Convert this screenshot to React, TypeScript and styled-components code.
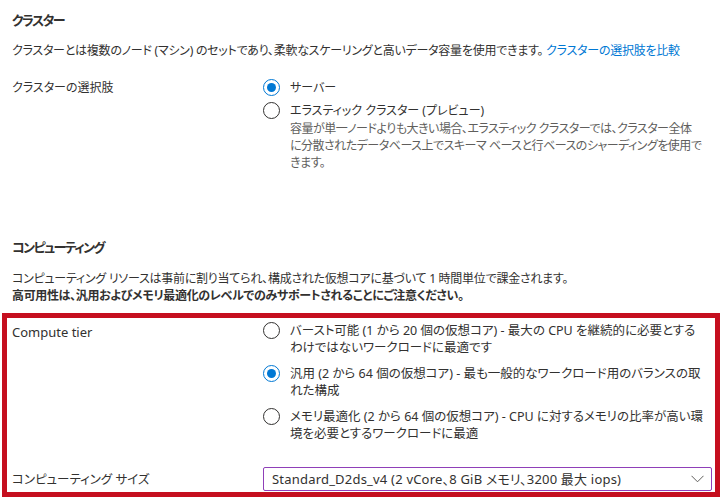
import * as React from 'react';
import styled, { createGlobalStyle } from 'styled-components';

const GlobalStyle = createGlobalStyle`
  html, body {
    margin: 0;
    padding: 0;
    background: #fff;
  }
  body {
    font-family: "Noto Sans", "Noto Sans CJK JP", sans-serif;
    font-size: 12px;
    color: #323130;
    font-feature-settings: "palt";
  }
`;

const Page = styled.div`
  width: 727px;
  padding-top: 10px;
`;

const Section = styled.section<{ $top?: number }>`
  padding: 0 12px;
  margin-top: ${(p) => p.$top ?? 0}px;
`;

const Heading = styled.h2`
  margin: 0;
  font-size: 13px;
  font-weight: 700;
  line-height: 20px;
  letter-spacing: -1.6px;
`;

const Para = styled.p<{ $top?: number }>`
  margin: ${(p) => p.$top ?? 0}px 0 0;
  line-height: 17px;
  white-space: nowrap;
  letter-spacing: -0.25px;
`;

const Strong = styled.strong`
  font-weight: 700;
  letter-spacing: -0.35px;
`;

const Link = styled.a`
  color: #0078d4;
  text-decoration: none;
`;

const FieldRow = styled.div<{ $top?: number }>`
  display: grid;
  grid-template-columns: 251px 1fr;
  margin-top: ${(p) => p.$top ?? 0}px;
`;

const FieldLabel = styled.div<{ $pad?: number; $size?: number }>`
  line-height: 17px;
  padding-top: ${(p) => p.$pad ?? 0}px;
  font-size: ${(p) => (p.$size ? `${p.$size}px` : 'inherit')};
`;

const OptionList = styled.div<{ $gap: number }>`
  display: flex;
  flex-direction: column;
  gap: ${(p) => p.$gap}px;
`;

const Option = styled.label`
  display: flex;
  align-items: flex-start;
  gap: 10px;
  line-height: 17px;
`;

const Circle = styled.span<{ $checked?: boolean }>`
  flex: none;
  box-sizing: border-box;
  width: 17px;
  height: 17px;
  border-radius: 50%;
  border: 1px solid ${(p) => (p.$checked ? '#0078d4' : '#323130')};
  display: flex;
  align-items: center;
  justify-content: center;
  &::after {
    content: '';
    display: ${(p) => (p.$checked ? 'block' : 'none')};
    width: 9px;
    height: 9px;
    border-radius: 50%;
    background: #0078d4;
  }
`;

const OptionText = styled.div`
  white-space: nowrap;
`;

const OptionDesc = styled.div`
  color: #605e5c;
  margin-top: 1px;
  letter-spacing: -0.5px;
`;

const Highlight = styled.div`
  margin: 9px 7px 0 2px;
  border: 5px solid #c50f1f;
  padding: 4px 3px 1px 5px;
  font-size: 12.5px;
`;

const Select = styled.div`
  box-sizing: border-box;
  height: 24px;
  border: 1px solid #8f3fb8;
  border-radius: 2px;
  display: flex;
  align-items: center;
  justify-content: space-between;
  padding: 0 7px 0 8px;
  line-height: 17px;
  white-space: nowrap;
  font-size: 13px;
  letter-spacing: 0.2px;
`;

const Chevron = () => (
  <svg width="13" height="8" viewBox="0 0 13 8" fill="none">
    <path d="M0.5 0.8 L6.5 6.8 L12.5 0.8" stroke="#605e5c" strokeWidth="1" />
  </svg>
);

const Radio = ({
  checked,
  children,
}: {
  checked?: boolean;
  children: React.ReactNode;
}) => (
  <Option>
    <Circle $checked={checked} />
    <OptionText>{children}</OptionText>
  </Option>
);

export default function App() {
  return (
    <Page>
      <GlobalStyle />
      <Section>
        <Heading>クラスター</Heading>
        <Para $top={12}>
          クラスターとは複数のノード (マシン) のセットであり、柔軟なスケーリングと高いデータ容量を使用できます。{' '}
          <Link href="#">クラスターの選択肢を比較</Link>
        </Para>
        <FieldRow $top={20}>
          <FieldLabel>クラスターの選択肢</FieldLabel>
          <OptionList $gap={6}>
            <Radio checked>サーバー</Radio>
            <Radio>
              エラスティック クラスター (プレビュー)
              <OptionDesc>
                容量が単一ノードよりも大きい場合、エラスティック クラスターでは、クラスター全体
                <br />
                に分散されたデータベース上でスキーマ ベースと行ベースのシャーディングを使用で
                <br />
                きます。
              </OptionDesc>
            </Radio>
          </OptionList>
        </FieldRow>
      </Section>

      <Section $top={66}>
        <Heading>コンピューティング</Heading>
        <Para $top={13}>
          コンピューティング リソースは事前に割り当てられ、構成された仮想コアに基づいて 1 時間単位で課金されます。
          <br />
          <Strong>高可用性は、汎用およびメモリ最適化のレベルでのみサポートされることにご注意ください。</Strong>
        </Para>
      </Section>

      <Highlight>
        <FieldRow>
          <FieldLabel $pad={2} $size={13}>Compute tier</FieldLabel>
          <OptionList $gap={9}>
            <Radio>
              バースト可能 (1 から 20 個の仮想コア) - 最大の CPU を継続的に必要とする
              <br />
              わけではないワークロードに最適です
            </Radio>
            <Radio checked>
              汎用 (2 から 64 個の仮想コア) - 最も一般的なワークロード用のバランスの取
              <br />
              れた構成
            </Radio>
            <Radio>
              メモリ最適化 (2 から 64 個の仮想コア) - CPU に対するメモリの比率が高い環
              <br />
              境を必要とするワークロードに最適
            </Radio>
          </OptionList>
        </FieldRow>
        <FieldRow $top={25}>
          <FieldLabel $pad={4}>コンピューティング サイズ</FieldLabel>
          <Select>
            <span>Standard_D2ds_v4 (2 vCore、8 GiB メモリ、3200 最大 iops)</span>
            <Chevron />
          </Select>
        </FieldRow>
      </Highlight>
    </Page>
  );
}
